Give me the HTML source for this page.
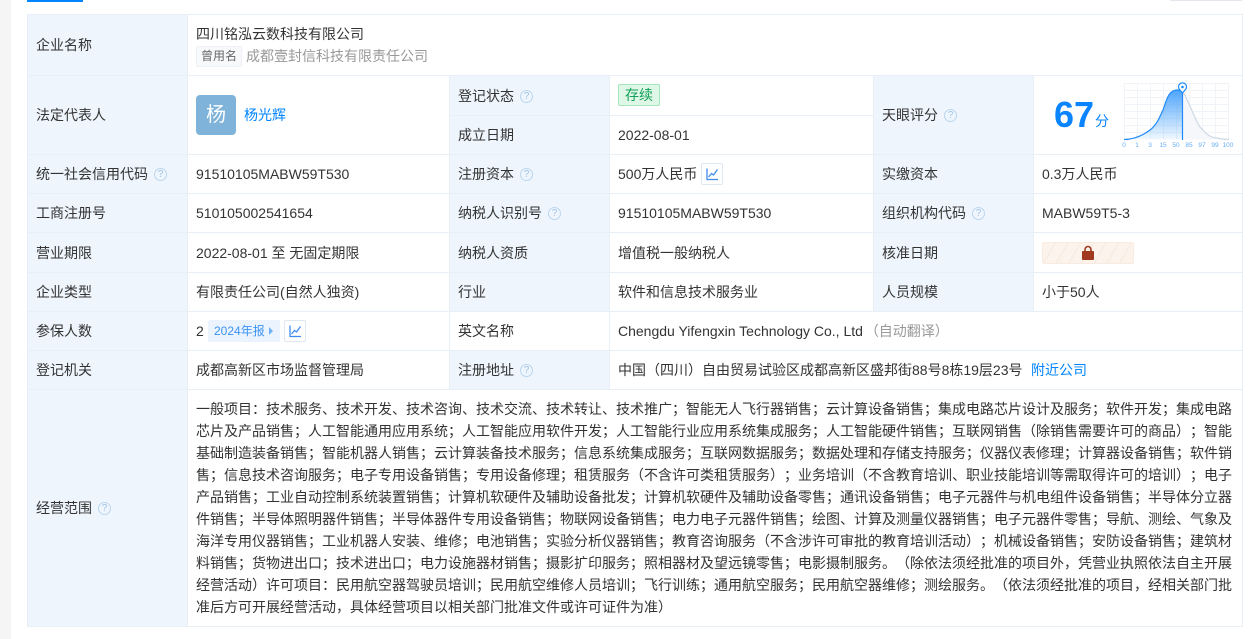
<!DOCTYPE html>
<html lang="zh"><head><meta charset="utf-8"><title>企业信息</title>
<style>
html,body{margin:0;padding:0;background:#fff}
body{width:1251px;height:639px;overflow:hidden;position:relative;font:14px/20px "Liberation Sans","Noto Sans CJK SC",sans-serif;color:#333;text-spacing-trim:space-all;text-autospace:no-autospace}
div,span.a,a{position:absolute;white-space:nowrap}
.l{background:#eef5fc}
.h{background:#e8eff6;height:1px}
.v{background:#e8eff6;width:1px}
.t{height:20px}
.q{display:inline-block;position:static;width:11px;height:11px;border:1px solid #bcd6ee;border-radius:50%;font:normal 10px/11px "Liberation Sans",sans-serif;color:#a0c4e6;text-align:center;margin-left:6px;vertical-align:2px}
a{color:#0084ff;text-decoration:none}
.b{width:20px;height:20px;border:1px solid #dfe7f0;border-radius:2px;background:#fff}
.s{left:196px;width:1036px;height:22px;line-height:22px;white-space:normal;text-align:justify;text-align-last:justify}
.s.e{text-align-last:left}
</style></head><body>
<div style="left:0;top:0;width:11px;height:639px;background:#f5f5f5"></div>
<div style="left:27px;top:0;width:56px;height:2px;background:#0084ff"></div>
<div style="left:1170px;top:0;width:72px;height:1px;background:#e3e6ec"></div>

<div class="l" style="left:28px;top:15px;width:159px;height:611px"></div>
<div class="l" style="left:450px;top:76px;width:159px;height:235px"></div>
<div class="l" style="left:450px;top:351px;width:159px;height:38px"></div>
<div class="l" style="left:874px;top:76px;width:159px;height:235px"></div>

<div class="h" style="left:27px;top:14px;width:1216px"></div>
<div class="h" style="left:27px;top:75px;width:1216px"></div>
<div class="h" style="left:449px;top:115px;width:424px"></div>
<div class="h" style="left:27px;top:154px;width:1216px"></div>
<div class="h" style="left:27px;top:193px;width:1216px"></div>
<div class="h" style="left:27px;top:232px;width:1216px"></div>
<div class="h" style="left:27px;top:272px;width:1216px"></div>
<div class="h" style="left:27px;top:311px;width:1216px"></div>
<div class="h" style="left:27px;top:350px;width:1216px"></div>
<div class="h" style="left:27px;top:389px;width:1216px"></div>
<div class="h" style="left:27px;top:626px;width:1216px"></div>
<div class="v" style="left:27px;top:14px;height:613px"></div>
<div class="v" style="left:187px;top:14px;height:613px"></div>
<div class="v" style="left:449px;top:75px;height:315px"></div>
<div class="v" style="left:609px;top:75px;height:315px"></div>
<div class="v" style="left:873px;top:75px;height:236px"></div>
<div class="v" style="left:1033px;top:75px;height:236px"></div>
<div class="v" style="left:1242px;top:14px;height:613px"></div>

<div class="t" style="left:36px;top:35px">企业名称</div>
<div class="t" style="left:196px;top:24px">四川铭泓云数科技有限公司</div>
<div style="left:196px;top:46px;width:44px;height:19px;background:#f8f9fb;border:1px solid #eef1f5;border-radius:2px;font-size:12px;line-height:19px;text-align:center;color:#666">曾用名</div>
<div class="t" style="left:246px;top:46px;color:#999">成都壹封信科技有限责任公司</div>

<div class="t" style="left:36px;top:105px">法定代表人</div>
<div style="left:196px;top:95px;width:40px;height:40px;background:#7fb3da;border-radius:4px;color:#fff;font-size:20px;line-height:40px;text-align:center">杨</div>
<a class="t" style="left:244px;top:105px">杨光辉</a>

<div class="t" style="left:458px;top:86px">登记状态<span class="q">?</span></div>
<div style="left:618px;top:84px;width:40px;height:20px;background:#def7e6;border:1px solid #a6e6bc;border-radius:2px;line-height:20px;text-align:center;color:#13a05a">存续</div>
<div class="t" style="left:458px;top:125px">成立日期</div>
<div class="t" style="left:618px;top:125px">2022-08-01</div>

<div class="t" style="left:882px;top:105px">天眼评分<span class="q">?</span></div>
<div style="left:1054px;top:94px;font:bold 36px/42px 'Liberation Sans',sans-serif;color:#0a84ff">67</div>
<div class="t" style="left:1095px;top:111px;color:#0a84ff">分</div>
<svg style="position:absolute;left:1120px;top:80px" width="122" height="72" viewBox="0 0 122 72">
<defs><linearGradient id="g" x1="0" y1="0" x2="0" y2="1"><stop offset="0" stop-color="#4fa5fb"/><stop offset="1" stop-color="#4fa5fb" stop-opacity=".08"/></linearGradient></defs>
<g stroke="#f0f4f9" stroke-width="1" fill="none">
<path d="M4.5 3V59M17.5 3V59M30.5 3V59M43.5 3V59M56.5 3V59M69.5 3V59M82.5 3V59M95.5 3V59M108.5 3V59"/>
<path d="M4 3.5H109M4 10.5H109M4 17.5H109M4 24.5H109M4 31.5H109M4 38.5H109M4 45.5H109M4 52.5H109"/>
</g>
<path d="M63 12C68 19 74 38 80 47C86 54 91 58 97 58C101 59 105 59.5 109 59.5H63Z" fill="#f5f7fa"/>
<path d="M63 12C68 19 74 38 80 47C86 54 91 58 97 58C101 59 105 59.5 109 59.5" fill="none" stroke="#cfd9e4" stroke-width="1.2"/>
<path d="M4 59.5C14 59.5 22 56 30 50C37 45 40 36 43 30C46 22 48 10 57 10C60 10 62 11 63 12V59.5Z" fill="url(#g)"/>
<path d="M4 59.5C14 59.5 22 56 30 50C37 45 40 36 43 30C46 22 48 10 57 10C60 10 62 11 63 12" fill="none" stroke="#1f8bfb" stroke-width="1.2"/>
<path d="M62.5 12V60" stroke="#1f8bfb" stroke-width="1.2"/>
<path d="M59.5 9.5A4 4 0 1 1 65.5 9.5L62.5 13Z" fill="#fff" stroke="#1f8bfb" stroke-width="1.2"/>
<circle cx="62.5" cy="7" r="1.3" fill="#1f8bfb"/>
<g font-family="Liberation Sans,sans-serif" font-size="6.5" fill="#66aef5" text-anchor="middle">
<text x="4" y="67">0</text><text x="17" y="67">1</text><text x="30" y="67">3</text><text x="43" y="67">15</text><text x="56" y="67">50</text><text x="69" y="67">85</text><text x="82" y="67">97</text><text x="95" y="67">99</text><text x="108" y="67">100</text>
</g>
</svg>

<div class="t" style="left:36px;top:164px">统一社会信用代码<span class="q">?</span></div>
<div class="t" style="left:196px;top:164px">91510105MABW59T530</div>
<div class="t" style="left:458px;top:164px">注册资本<span class="q">?</span></div>
<div class="t" style="left:618px;top:164px">500万人民币</div>
<div class="b" style="left:701px;top:163px"><svg width="20" height="20" viewBox="0 0 20 20" fill="none" stroke="#3f8cf0" stroke-width="1.3"><path d="M5 4.5V15.5H16"/><path d="M6.5 13L9.5 9.5L11.5 11L15.5 5.5"/></svg></div>
<div class="t" style="left:882px;top:164px">实缴资本</div>
<div class="t" style="left:1042px;top:164px">0.3万人民币</div>

<div class="t" style="left:36px;top:203px">工商注册号</div>
<div class="t" style="left:196px;top:203px">510105002541654</div>
<div class="t" style="left:458px;top:203px">纳税人识别号<span class="q">?</span></div>
<div class="t" style="left:618px;top:203px">91510105MABW59T530</div>
<div class="t" style="left:882px;top:203px">组织机构代码<span class="q">?</span></div>
<div class="t" style="left:1042px;top:203px">MABW59T5-3</div>

<div class="t" style="left:36px;top:243px">营业期限</div>
<div class="t" style="left:196px;top:243px">2022-08-01 至 无固定期限</div>
<div class="t" style="left:458px;top:243px">纳税人资质</div>
<div class="t" style="left:618px;top:243px">增值税一般纳税人</div>
<div class="t" style="left:882px;top:243px">核准日期</div>
<div style="left:1042px;top:242px;width:90px;height:20px;border:1px solid #f9ebdf;border-radius:2px;background:repeating-linear-gradient(120deg,#fbf3ec 0 10px,#f5eadf 10px 11px)"></div>
<svg style="position:absolute;left:1082px;top:245px" width="12" height="16" viewBox="0 0 12 16"><path d="M3 7V4.5A3 3 0 0 1 9 4.5V7" fill="none" stroke="#a0391e" stroke-width="1.6"/><rect x="0" y="6" width="12" height="9" rx="1" fill="#a0391e"/></svg>

<div class="t" style="left:36px;top:282px">企业类型</div>
<div class="t" style="left:196px;top:282px">有限责任公司(自然人独资)</div>
<div class="t" style="left:458px;top:282px">行业</div>
<div class="t" style="left:618px;top:282px">软件和信息技术服务业</div>
<div class="t" style="left:882px;top:282px">人员规模</div>
<div class="t" style="left:1042px;top:282px">小于50人</div>

<div class="t" style="left:36px;top:321px">参保人数</div>
<div class="t" style="left:196px;top:321px">2</div>
<div style="left:208px;top:320px;width:72px;height:22px;background:#ebf4fe;border-radius:2px;color:#3b93f5;font-size:12px;line-height:22px;text-indent:6px">2024年报</div>
<div style="left:269px;top:327px;width:0;height:0;border-left:4px solid #6db0f7;border-top:4px solid transparent;border-bottom:4px solid transparent"></div>
<div class="b" style="left:284px;top:320px"><svg width="20" height="20" viewBox="0 0 20 20" fill="none" stroke="#3f8cf0" stroke-width="1.3"><path d="M5 4.5V15.5H16"/><path d="M6.5 13L9.5 9.5L11.5 11L15.5 5.5"/></svg></div>
<div class="t" style="left:458px;top:321px">英文名称</div>
<div class="t" style="left:618px;top:321px">Chengdu Yifengxin Technology Co., Ltd <span style="color:#999;margin-left:-2px">（自动翻译）</span></div>

<div class="t" style="left:36px;top:360px">登记机关</div>
<div class="t" style="left:196px;top:360px">成都高新区市场监督管理局</div>
<div class="t" style="left:458px;top:360px">注册地址<span class="q">?</span></div>
<div class="t" style="left:618px;top:360px">中国（四川）自由贸易试验区成都高新区盛邦街88号8栋19层23号</div>
<a class="t" style="left:1031px;top:360px">附近公司</a>

<div class="t" style="left:36px;top:498px">经营范围<span class="q">?</span></div>
<div class="s" style="top:398px">一般项目：技术服务、技术开发、技术咨询、技术交流、技术转让、技术推广；智能无人飞行器销售；云计算设备销售；集成电路芯片设计及服务；软件开发；集成电路</div>
<div class="s" style="top:420px">芯片及产品销售；人工智能通用应用系统；人工智能应用软件开发；人工智能行业应用系统集成服务；人工智能硬件销售；互联网销售（除销售需要许可的商品）；智能</div>
<div class="s" style="top:442px">基础制造装备销售；智能机器人销售；云计算装备技术服务；信息系统集成服务；互联网数据服务；数据处理和存储支持服务；仪器仪表修理；计算器设备销售；软件销</div>
<div class="s" style="top:464px">售；信息技术咨询服务；电子专用设备销售；专用设备修理；租赁服务（不含许可类租赁服务）；业务培训（不含教育培训、职业技能培训等需取得许可的培训）；电子</div>
<div class="s" style="top:486px">产品销售；工业自动控制系统装置销售；计算机软硬件及辅助设备批发；计算机软硬件及辅助设备零售；通讯设备销售；电子元器件与机电组件设备销售；半导体分立器</div>
<div class="s" style="top:508px">件销售；半导体照明器件销售；半导体器件专用设备销售；物联网设备销售；电力电子元器件销售；绘图、计算及测量仪器销售；电子元器件零售；导航、测绘、气象及</div>
<div class="s" style="top:530px">海洋专用仪器销售；工业机器人安装、维修；电池销售；实验分析仪器销售；教育咨询服务（不含涉许可审批的教育培训活动）；机械设备销售；安防设备销售；建筑材</div>
<div class="s" style="top:552px">料销售；货物进出口；技术进出口；电力设施器材销售；摄影扩印服务；照相器材及望远镜零售；电影摄制服务。（除依法须经批准的项目外，凭营业执照依法自主开展</div>
<div class="s" style="top:574px">经营活动）许可项目：民用航空器驾驶员培训；民用航空维修人员培训；飞行训练；通用航空服务；民用航空器维修；测绘服务。（依法须经批准的项目，经相关部门批</div>
<div class="s e" style="top:596px">准后方可开展经营活动，具体经营项目以相关部门批准文件或许可证件为准）</div>
</body></html>
